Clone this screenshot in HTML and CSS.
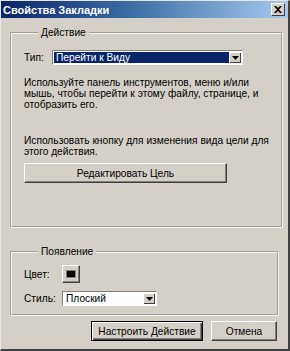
FILE: index.html
```html
<!DOCTYPE html>
<html lang="ru">
<head>
    <meta charset="UTF-8">
    <title>Свойства Закладки</title>
    <link rel="stylesheet" href="styles.css">
</head>
<body>
    <div class="window">
        <div class="titlebar">
            <span class="title">Свойства Закладки</span>
            <span class="close">
                <svg width="8" height="7" viewBox="0 0 8 7"><path d="M0 0L2 0L4 2L6 0L8 0L5 3.5L8 7L6 7L4 5L2 7L0 7L3 3.5Z" fill="#000"/></svg>
            </span>
        </div>

        <div class="content">
            <!-- Action group -->
            <fieldset class="group group-action">
                <legend>Действие</legend>
                <div class="row">
                    <span class="label label-type">Тип:</span>
                    <div class="combo combo-type">
                        <span class="combo-value selected">Перейти к Виду</span>
                        <span class="combo-arrow"><svg width="7" height="4" viewBox="0 0 7 4"><path d="M0 0H7L3.5 4Z" fill="#000"/></svg></span>
                    </div>
                </div>
                <p class="hint hint-first">Используйте панель инструментов, меню и/или<br>мышь, чтобы перейти к этому файлу, странице, и<br>отобразить его.</p>
                <p class="hint hint-second">Использовать кнопку для изменения вида цели для<br>этого действия.</p>
                <button class="btn btn-wide">Редактировать Цель</button>
            </fieldset>

            <!-- Appearance group -->
            <fieldset class="group group-look">
                <legend>Появление</legend>
                <div class="row row-color">
                    <span class="label label-look">Цвет:</span>
                    <span class="swatch"><span class="swatch-fill"></span></span>
                </div>
                <div class="row row-style">
                    <span class="label label-look">Стиль:</span>
                    <div class="combo combo-style">
                        <span class="combo-value">Плоский</span>
                        <span class="combo-arrow"><svg width="7" height="4" viewBox="0 0 7 4"><path d="M0 0H7L3.5 4Z" fill="#000"/></svg></span>
                    </div>
                </div>
            </fieldset>

            <div class="actions">
                <button class="btn btn-default">Настроить Действие</button>
                <button class="btn btn-cancel">Отмена</button>
            </div>
        </div>
    </div>
</body>
</html>
```

FILE: styles.css
```css
html, body {
    margin: 0;
    padding: 0;
}
body {
    font-family: "Liberation Sans", Arial, sans-serif;
    font-size: 10.2px;
    color: #000;
    background-color: #d4d0c8;
}
.window {
    width: 290px;
    height: 351px;
    box-sizing: border-box;
    background-color: #d4d0c8;
    border-left: 1px solid #e8e6e0;
    border-top: 1px solid #e8e6e0;
    border-right: 2px solid #404040;
    border-bottom: 2px solid #404040;
}
.titlebar {
    height: 17px;
    display: flex;
    align-items: center;
    justify-content: space-between;
    padding: 0 3px 0 2px;
    background: linear-gradient(to right, #0a246a 0%, #3a6ea5 45%, #a6caf0 100%);
}
.title {
    color: #fff;
    font-weight: bold;
    font-size: 11px;
}
.close {
    width: 14px;
    height: 13px;
    box-sizing: border-box;
    display: flex;
    align-items: center;
    justify-content: center;
    background-color: #d4d0c8;
    border: 1px solid;
    border-color: #fff #404040 #404040 #fff;
}
.content {
    padding: 9px 9px 0 9px;
}
.group {
    margin: 0;
    border: 2px groove #f4f2ee;
    padding: 0 12px;
}
.group legend {
    padding: 0 3px;
    margin-left: 14px;
    line-height: 12px;
}
.group-action {
    height: 201px;
    box-sizing: border-box;
    padding-top: 11px;
}
.group-look {
    margin-top: 18px;
    height: 70px;
    box-sizing: border-box;
    padding-top: 7px;
}
.row {
    display: flex;
    align-items: center;
}
.label-type {
    width: 28px;
}
.label-look {
    width: 38px;
}
.combo {
    display: flex;
    height: 15px;
    box-sizing: border-box;
    background-color: #fff;
    border: 1px solid;
    border-color: #808080 #fff #fff #808080;
    padding: 1px;
}
.combo-type {
    width: 191px;
}
.combo-style {
    width: 95px;
}
.combo-value {
    flex: 1;
    padding-left: 2px;
    line-height: 11px;
}
.combo-value.selected {
    background-color: #0a246a;
    color: #fff;
}
.combo-arrow {
    width: 12px;
    display: flex;
    align-items: center;
    justify-content: center;
    background-color: #d4d0c8;
    box-shadow: inset 1px 1px #fff, inset -1px -1px #404040;
}
.hint {
    margin: 0;
    line-height: 11px;
    white-space: nowrap;
}
.hint-first {
    margin-top: 12px;
}
.hint-second {
    margin-top: 25px;
}
.btn {
    font-family: inherit;
    font-size: 10.2px;
    color: #000;
    background-color: #d4d0c8;
    border: 1px solid;
    border-color: #fff #404040 #404040 #fff;
    box-shadow: inset -1px -1px #808080;
    padding: 0;
    height: 20px;
}
.btn-wide {
    display: block;
    margin-top: 6px;
    width: 203px;
}
.row-color {
    height: 18px;
}
.swatch {
    width: 18px;
    height: 18px;
    box-sizing: border-box;
    display: flex;
    align-items: center;
    justify-content: center;
    border: 1px solid;
    border-color: #fff #404040 #404040 #fff;
    box-shadow: inset -1px -1px #808080;
}
.swatch-fill {
    width: 8px;
    height: 6px;
    background-color: #000;
    border: 1px solid #808080;
}
.row-style {
    margin-top: 8px;
}
.actions {
    display: flex;
    justify-content: flex-end;
    gap: 8px;
    margin-top: 5px;
    padding-right: 2px;
}
.btn-default {
    width: 112px;
    border: 1px solid #000;
    box-shadow: inset 1px 1px #fff, inset -1px -1px #404040, inset -2px -2px #808080;
}
.btn-cancel {
    width: 66px;
}
```
